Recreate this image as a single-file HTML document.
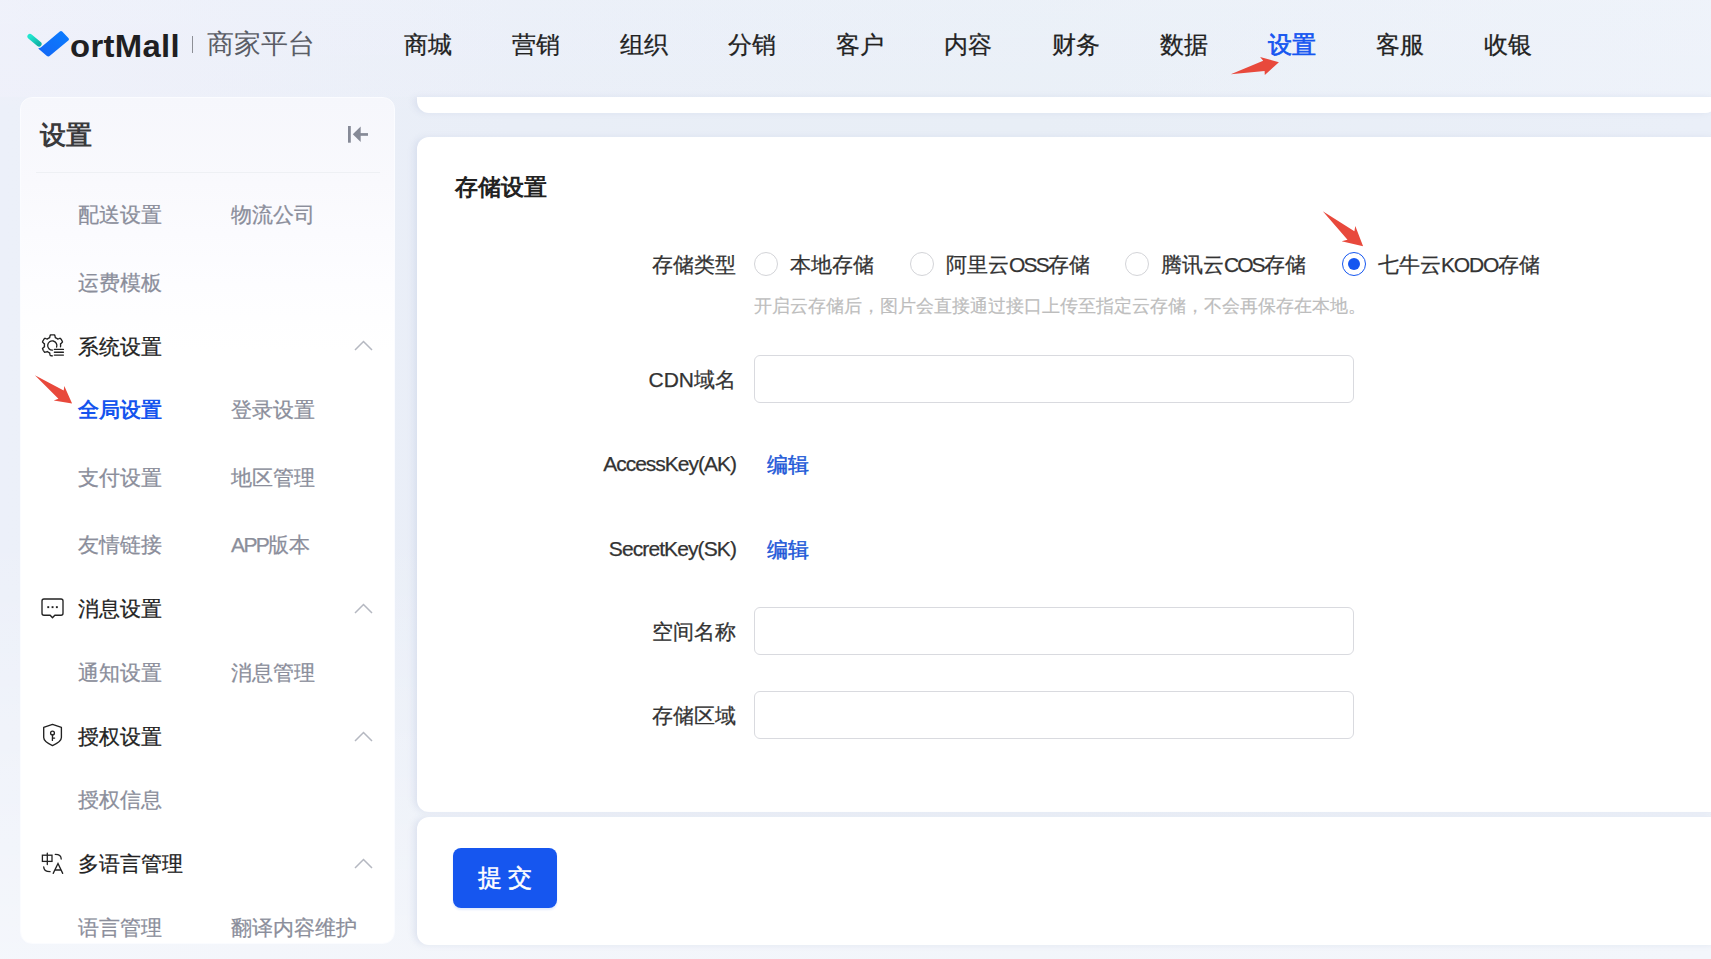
<!DOCTYPE html>
<html><head><meta charset="utf-8">
<style>
*{margin:0;padding:0;box-sizing:border-box}
html,body{width:1711px;height:959px;overflow:hidden}
body{position:relative;font-family:"Liberation Sans",sans-serif;background:linear-gradient(180deg,rgba(255,255,255,0.12) 0%,rgba(255,255,255,0) 14%,rgba(255,255,255,0) 55%,rgba(255,255,255,0.45) 100%),linear-gradient(90deg,#ecf0f9 0%,#e9eef7 30%,#e8eef6 60%,#eaeff8 100%);color:#222}
.a,.lbl,.rl,.link{-webkit-text-stroke:0.25px currentColor}
.nb{-webkit-text-stroke:0 !important}
.a{position:absolute;white-space:nowrap}
.hdr{position:absolute;left:0;top:0;width:1711px;height:97px;background:linear-gradient(90deg,rgba(240,241,251,0.6) 0%,rgba(236,240,250,0.3) 30%,rgba(236,242,250,0.3) 60%,rgba(240,244,251,0.6) 100%)}
.nav{position:absolute;top:30px;height:30px;line-height:30px;font-size:24px;color:#222}
.side{position:absolute;left:20px;top:97px;width:375px;height:847px;border-radius:12px;border:1px solid #fbfcff;background:linear-gradient(180deg,#f6f7fc 0%,#f9f9fd 10%,#fdfdff 22%,#ffffff 30%,#ffffff 100%)}
.si{position:absolute;height:30px;line-height:30px;font-size:21px;color:#8b8e9b}
.sh{position:absolute;height:30px;line-height:30px;font-size:21px;color:#222;left:78px}
.chev{position:absolute;left:354px;width:19px;height:11px}
.ico{position:absolute;left:41px}
.panel{position:absolute;left:417px;width:1300px;background:#fff;box-shadow:-4px 0 6px -1px rgba(196,203,226,0.45)}
.lbl{position:absolute;height:30px;line-height:30px;font-size:21px;color:#333;text-align:right;right:975px}
.inp{position:absolute;left:754px;width:600px;height:48px;border:1px solid #d9dadf;border-radius:6px;background:#fff}
.radio{position:absolute;top:252px;width:24px;height:24px;border:1px solid #d3d4d8;border-radius:50%;background:#fff}
.rl{position:absolute;top:250px;height:30px;line-height:30px;font-size:21px;color:#333}
.link{position:absolute;left:767px;height:30px;line-height:30px;font-size:21px;color:#2158d8;-webkit-text-stroke:0.45px #2158d8}
</style></head><body>
<div class="hdr"></div>

<!-- logo -->
<svg class="a" style="left:0;top:0" width="200" height="70" viewBox="0 0 200 70">
  <defs>
    <linearGradient id="tg" x1="0" y1="0" x2="1" y2="1"><stop offset="0" stop-color="#22e6cf"/><stop offset="1" stop-color="#0fb3a6"/></linearGradient>
    <linearGradient id="bg" x1="0" y1="1" x2="1" y2="0"><stop offset="0" stop-color="#1466f5"/><stop offset="1" stop-color="#0a7dff"/></linearGradient>
  </defs>
  <path d="M30 36.4 L39 44" stroke="url(#tg)" stroke-width="5.2" stroke-linecap="round"/>
  <path d="M38.2 48.6 L40.8 47.6 L59.8 31.6 Q61 30.6 62.2 31.6 L68.6 38.2 Q69.4 39.2 68.6 40.2 L50.2 55.6 Q48.4 57.2 46.6 55.8 Z" fill="url(#bg)"/>
</svg>
<div class="a nb" style="left:70px;top:28px;height:38px;line-height:38px;font-size:31px;font-weight:bold;color:#1f1f22;letter-spacing:0.3px;transform:scaleX(1.06);transform-origin:0 0">ortMall</div>
<div class="a" style="left:192px;top:36px;width:1px;height:17px;background:#8d8f96"></div>
<div class="a nb" style="left:207px;top:28px;height:32px;line-height:32px;font-size:26.5px;color:#5a5d66">商家平台</div>

<div class="a nav" style="left:404px">商城</div>
<div class="a nav" style="left:512px">营销</div>
<div class="a nav" style="left:620px">组织</div>
<div class="a nav" style="left:728px">分销</div>
<div class="a nav" style="left:836px">客户</div>
<div class="a nav" style="left:944px">内容</div>
<div class="a nav" style="left:1052px">财务</div>
<div class="a nav" style="left:1160px">数据</div>
<div class="a nav" style="left:1268px;color:#1556f0;-webkit-text-stroke:0.7px #1556f0">设置</div>
<div class="a nav" style="left:1376px">客服</div>
<div class="a nav" style="left:1484px">收银</div>

<!-- sidebar -->
<div class="side"></div>
<div class="a nb" style="left:39.5px;top:119px;height:32px;line-height:32px;font-size:25.5px;font-weight:bold;color:#3a3a3c">设置</div>
<svg class="a" style="left:338px;top:116px" width="40" height="40" viewBox="0 0 40 40">
  <rect x="10" y="10" width="2.8" height="16.7" fill="#868a97"/>
  <path d="M14.8 18.3 L22.7 10.6 L22.7 26 Z" fill="#868a97"/>
  <rect x="22" y="17.1" width="8" height="2.7" fill="#868a97"/>
</svg>
<div class="a" style="left:36px;top:172px;width:344px;height:1px;background:#eef0f4"></div>

<div class="a si" style="left:78px;top:200px">配送设置</div>
<div class="a si" style="left:231px;top:200px">物流公司</div>
<div class="a si" style="left:78px;top:268px">运费模板</div>

<div class="a sh" style="top:332px">系统设置</div>
<div class="a si nb" style="left:78px;top:395px;color:#1554ee;font-weight:bold">全局设置</div>
<div class="a si" style="left:231px;top:395px">登录设置</div>
<div class="a si" style="left:78px;top:463px">支付设置</div>
<div class="a si" style="left:231px;top:463px">地区管理</div>
<div class="a si" style="left:78px;top:530px">友情链接</div>
<div class="a si" style="left:231px;top:530px"><span style="letter-spacing:-1.6px">APP</span>版本</div>

<div class="a sh" style="top:594px">消息设置</div>
<div class="a si" style="left:78px;top:658px">通知设置</div>
<div class="a si" style="left:231px;top:658px">消息管理</div>

<div class="a sh" style="top:722px">授权设置</div>
<div class="a si" style="left:78px;top:785px">授权信息</div>

<div class="a sh" style="top:849px">多语言管理</div>
<div class="a si" style="left:78px;top:913px">语言管理</div>
<div class="a si" style="left:231px;top:913px">翻译内容维护</div>

<!-- sidebar icons -->
<svg class="a" style="left:36px;top:328px" width="36" height="36" viewBox="0 0 36 36" fill="none" stroke="#222" stroke-width="1.35" stroke-linejoin="round" stroke-linecap="round">
  <path d="M16.5 27.8L16.1 27.8L15.8 27.8L15.4 27.7L15.0 27.7L14.7 27.6L14.3 27.6L14.1 26.9L13.9 26.2L13.8 25.6L13.7 24.9L13.5 24.8L13.2 24.7L12.9 24.6L12.7 24.5L12.5 24.3L12.2 24.2L12.0 24.0L11.7 23.9L11.5 23.7L11.3 23.5L10.7 23.8L10.0 24.0L9.4 24.2L8.7 24.3L8.5 24.0L8.2 23.8L8.0 23.5L7.8 23.2L7.6 22.9L7.4 22.6L7.2 22.2L7.1 21.9L6.9 21.6L6.8 21.2L6.6 20.9L6.5 20.5L7.0 20.0L7.5 19.5L8.0 19.1L8.5 18.7L8.5 18.4L8.4 18.1L8.4 17.9L8.4 17.6L8.4 17.3L8.4 17.0L8.4 16.7L8.4 16.5L8.5 16.2L8.5 15.9L8.0 15.5L7.5 15.1L7.0 14.6L6.5 14.1L6.6 13.7L6.8 13.4L6.9 13.0L7.1 12.7L7.2 12.4L7.4 12.1L7.6 11.7L7.8 11.4L8.0 11.1L8.2 10.8L8.5 10.6L8.7 10.3L9.4 10.4L10.0 10.6L10.7 10.8L11.3 11.1L11.5 10.9L11.7 10.7L12.0 10.6L12.2 10.4L12.4 10.3L12.7 10.1L12.9 10.0L13.2 9.9L13.5 9.8L13.7 9.7L13.8 9.0L13.9 8.4L14.1 7.7L14.3 7.0L14.7 7.0L15.0 6.9L15.4 6.9L15.8 6.8L16.1 6.8L16.5 6.8L16.9 6.8L17.2 6.8L17.6 6.9L18.0 6.9L18.3 7.0L18.7 7.0L18.9 7.7L19.1 8.4L19.2 9.0L19.3 9.7L19.5 9.8L19.8 9.9L20.1 10.0L20.3 10.1L20.6 10.3L20.8 10.4L21.0 10.6L21.3 10.7L21.5 10.9L21.7 11.1L22.3 10.8L23.0 10.6L23.6 10.4L24.3 10.3L24.5 10.6L24.8 10.8L25.0 11.1L25.2 11.4L25.4 11.7L25.6 12.0L25.8 12.4L25.9 12.7L26.1 13.0L26.2 13.4L26.4 13.7L26.5 14.1L26.0 14.6L25.5 15.1L25.0 15.5L24.5 15.9L24.5 16.2L24.6 16.5L24.6 16.7L24.6 17.0L24.6 17.3L24.6 17.6L24.6 17.9L24.6 18.1L24.5 18.4L24.5 18.7"/>
  <path d="M20.6 19.1 A4.6 4.6 0 1 0 16.5 22.1"/>
  <path d="M18.4 21.4 H27.4 M18.4 24.2 H27.4 M18.4 27.1 H27.4" stroke-width="1.4"/>
</svg>
<svg class="a" style="left:36px;top:590px" width="36" height="36" viewBox="0 0 36 36" fill="none" stroke="#222" stroke-width="1.35" stroke-linejoin="round">
  <path d="M8 9 H25 Q27 9 27 11 V23.2 Q27 25.2 25 25.2 H18.8 L16.5 27.8 L14.2 25.2 H8 Q6 25.2 6 23.2 V11 Q6 9 8 9 Z"/>
  <rect x="11.3" y="16.2" width="1.9" height="1.9" fill="#222" stroke="none"/>
  <rect x="15.6" y="16.2" width="1.9" height="1.9" fill="#222" stroke="none"/>
  <rect x="19.9" y="16.2" width="1.9" height="1.9" fill="#222" stroke="none"/>
</svg>
<svg class="a" style="left:36px;top:718px" width="36" height="36" viewBox="0 0 36 36" fill="none" stroke="#222" stroke-width="1.35" stroke-linejoin="round" stroke-linecap="round">
  <path d="M16.5 6.4 L25.4 9.4 V19.5 Q25.4 23.6 16.5 27.6 Q7.7 23.6 7.7 19.5 V9.4 Z"/>
  <circle cx="16.5" cy="15" r="1.9"/>
  <path d="M16.5 16.9 L16.4 22.4 M16.6 20.1 H18.6"/>
</svg>
<svg class="a" style="left:36px;top:846px" width="36" height="36" viewBox="0 0 36 36" fill="none" stroke="#222" stroke-width="1.3" stroke-linecap="round">
  <rect x="6.4" y="9.2" width="9.6" height="6.2" stroke-linecap="butt"/>
  <path d="M11.3 7.1 V18.6"/>
  <path d="M19.3 8.4 Q25.2 8.4 25.2 13.1"/>
  <path d="M7.7 20.8 Q7.7 25.7 14.1 25.7"/>
  <path d="M17.2 27.4 L22 17.4 L26.7 27.4 M19.2 24 H24.8"/>
</svg>
<!-- chevrons -->
<svg class="chev" style="top:340px" viewBox="0 0 19 11"><path d="M1 10 L9.5 1.5 L18 10" stroke="#b5b8c1" stroke-width="1.5" fill="none"/></svg>
<svg class="chev" style="top:603px" viewBox="0 0 19 11"><path d="M1 10 L9.5 1.5 L18 10" stroke="#b5b8c1" stroke-width="1.5" fill="none"/></svg>
<svg class="chev" style="top:731px" viewBox="0 0 19 11"><path d="M1 10 L9.5 1.5 L18 10" stroke="#b5b8c1" stroke-width="1.5" fill="none"/></svg>
<svg class="chev" style="top:858px" viewBox="0 0 19 11"><path d="M1 10 L9.5 1.5 L18 10" stroke="#b5b8c1" stroke-width="1.5" fill="none"/></svg>

<!-- main panels -->
<div class="panel" style="top:97px;height:16px;border-radius:0 0 12px 12px"></div>
<div class="panel" style="top:137px;height:675px;border-radius:12px 0 0 12px"></div>
<div class="panel" style="top:817px;height:128px;border-radius:12px 0 0 12px"></div>

<div class="a nb" style="left:455px;top:171px;height:32px;line-height:32px;font-size:23px;font-weight:bold;color:#222">存储设置</div>

<div class="lbl" style="top:250px">存储类型</div>
<div class="radio" style="left:754px"></div>
<div class="rl" style="left:790px">本地存储</div>
<div class="radio" style="left:910px"></div>
<div class="rl" style="left:946px">阿里云<span style="letter-spacing:-1.8px">OSS</span>存储</div>
<div class="radio" style="left:1125px"></div>
<div class="rl" style="left:1161px">腾讯云<span style="letter-spacing:-2px">COS</span>存储</div>
<div class="radio" style="left:1342px;border:1.3px solid #1556f0"><div style="position:absolute;left:4.7px;top:4.7px;width:12px;height:12px;border-radius:50%;background:#1556f0"></div></div>
<div class="rl" style="left:1378px">七牛云<span style="letter-spacing:-1.2px">KODO</span>存储</div>
<div class="a" style="left:754px;top:293px;height:26px;line-height:26px;font-size:18px;color:#bdbdbd;-webkit-text-stroke:0.2px #bdbdbd">开启云存储后，图片会直接通过接口上传至指定云存储，不会再保存在本地。</div>

<div class="lbl" style="top:365px">CDN域名</div>
<div class="inp" style="top:355px"></div>

<div class="lbl" style="top:449px;letter-spacing:-1px">AccessKey(AK)</div>
<div class="link" style="top:450px">编辑</div>

<div class="lbl" style="top:534px;letter-spacing:-0.9px">SecretKey(SK)</div>
<div class="link" style="top:535px">编辑</div>

<div class="lbl" style="top:617px">空间名称</div>
<div class="inp" style="top:607px"></div>

<div class="lbl" style="top:701px">存储区域</div>
<div class="inp" style="top:691px"></div>

<div class="a" style="left:453px;top:848px;width:104px;height:60px;border-radius:8px;background:#1656ef;box-shadow:0 2px 2px rgba(22,86,239,0.12);color:#fff;font-size:24px;line-height:60px;text-align:center;letter-spacing:6px;padding-left:6px;-webkit-text-stroke:0.5px #fff">提交</div>

<!-- red arrows -->
<svg class="a" style="left:0;top:0" width="1711" height="959" viewBox="0 0 1711 959">
  <path d="M1230.8 74.3 L1263.2 60.8 L1260.1 57 L1278.9 62.3 L1264.8 75 L1264.6 70.9 Z" fill="#e8493c"/>
  <path d="M1322.8 211.3 L1354.4 231.3 L1355.3 225.9 L1363.1 246.3 L1341.6 241.3 L1347.5 239.7 Z" fill="#e8493c"/>
  <path d="M34.9 375.2 L63.7 390.5 L64.3 386.1 L72.1 403.4 L53.7 400.5 L58.4 398.7 Z" fill="#e8493c"/>
</svg>
</body></html>
